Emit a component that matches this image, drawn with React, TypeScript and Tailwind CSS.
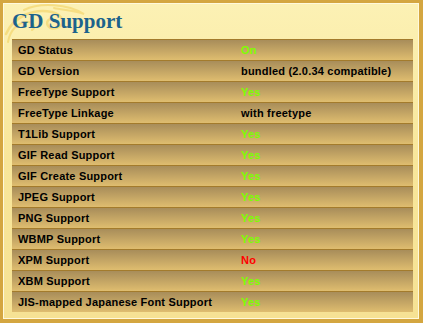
const rows: { label: string; value: string; tone?: 'yes' | 'no' }[] = [
  { label: 'GD Status', value: 'On', tone: 'yes' },
  { label: 'GD Version', value: 'bundled (2.0.34 compatible)' },
  { label: 'FreeType Support', value: 'Yes', tone: 'yes' },
  { label: 'FreeType Linkage', value: 'with freetype' },
  { label: 'T1Lib Support', value: 'Yes', tone: 'yes' },
  { label: 'GIF Read Support', value: 'Yes', tone: 'yes' },
  { label: 'GIF Create Support', value: 'Yes', tone: 'yes' },
  { label: 'JPEG Support', value: 'Yes', tone: 'yes' },
  { label: 'PNG Support', value: 'Yes', tone: 'yes' },
  { label: 'WBMP Support', value: 'Yes', tone: 'yes' },
  { label: 'XPM Support', value: 'No', tone: 'no' },
  { label: 'XBM Support', value: 'Yes', tone: 'yes' },
  { label: 'JIS-mapped Japanese Font Support', value: 'Yes', tone: 'yes' },
];

// faint gold scrollwork in the panel corner
const Flourish = () => (
  <svg
    className="absolute left-0 top-0 pointer-events-none"
    width="90"
    height="40"
    viewBox="0 0 90 40"
    fill="none"
    opacity="0.45"
  >
    <path
      d="M2 30 C10 12, 30 4, 48 8 C60 11, 62 22, 52 24 C44 26, 40 18, 46 15"
      stroke="#efc94a"
      strokeWidth="2.5"
      strokeLinecap="round"
    />
    <path
      d="M20 6 C36 -2, 64 0, 80 10 C70 6, 58 6, 50 4"
      stroke="#efc94a"
      strokeWidth="2"
      strokeLinecap="round"
    />
    <path
      d="M4 38 C6 26, 14 18, 24 18 C30 18, 32 24, 28 26"
      stroke="#efc94a"
      strokeWidth="2"
      strokeLinecap="round"
    />
  </svg>
);

export default function App() {
  return (
    <div className="w-[423px] h-[323px] bg-[#d4a640] pt-[3px] pl-[3px] pr-[4px] pb-[4px]">
      <div className="relative h-full border border-[#fff9dc] bg-gradient-to-b from-[#fcf1b4] via-[#f8e69a] to-[#f6e294] pl-[8px] pr-[5px]">
        <Flourish />
        <h2
          className="relative pt-[5px] mb-[6px] text-[21px] leading-[24px] font-bold text-[#1c638c]"
          style={{ fontFamily: '"Liberation Serif", "Times New Roman", serif' }}
        >
          GD Support
        </h2>
        <div
          className="relative text-[11px] font-bold tracking-[0.2px] text-black"
          style={{ fontFamily: '"Liberation Sans", Arial, sans-serif' }}
        >
          {rows.map((r) => (
            <div
              key={r.label}
              className="flex h-[21px] border-t border-[#a37b2c] bg-gradient-to-b from-[#a88d5a] to-[#dfbd6f] leading-[20px]"
            >
              <div className="w-[223px] pl-[6px] whitespace-nowrap">{r.label}</div>
              <div
                className={
                  'pl-[6px] whitespace-nowrap ' +
                  (r.tone === 'yes'
                    ? 'text-[#7cff00]'
                    : r.tone === 'no'
                      ? 'text-[#ff0000]'
                      : '')
                }
              >
                {r.value}
              </div>
            </div>
          ))}
        </div>
      </div>
    </div>
  );
}
